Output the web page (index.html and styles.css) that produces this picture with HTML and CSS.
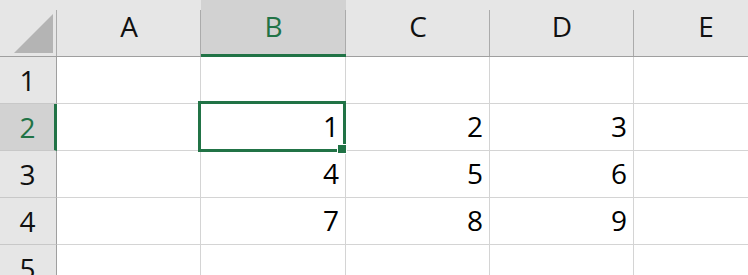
FILE: index.html
```html
<!DOCTYPE html>
<html lang="ja">
<head>
<meta charset="utf-8">
<title>Sheet</title>
<link rel="stylesheet" href="styles.css">
</head>
<body>
<div class="sheet">
  <div class="hd corner"><svg class="tri" width="40" height="40" viewBox="0 0 40 40"><polygon points="0,39 39,39 39,0" fill="#b4b4b4"/></svg></div>
  <div class="hd col">A</div>
  <div class="hd col sel">B</div>
  <div class="hd col">C</div>
  <div class="hd col">D</div>
  <div class="hd col">E</div>

  <div class="rh">1</div>
  <div class="c"></div><div class="c"></div><div class="c"></div><div class="c"></div><div class="c"></div>

  <div class="rh sel">2</div>
  <div class="c"></div>
  <div class="c active">1<span class="selbox"><span class="handle"></span></span></div>
  <div class="c">2</div><div class="c">3</div><div class="c"></div>

  <div class="rh">3</div>
  <div class="c"></div><div class="c">4</div><div class="c">5</div><div class="c">6</div><div class="c"></div>

  <div class="rh">4</div>
  <div class="c"></div><div class="c">7</div><div class="c">8</div><div class="c">9</div><div class="c"></div>

  <div class="rh">5</div>
  <div class="c"></div><div class="c"></div><div class="c"></div><div class="c"></div><div class="c"></div>
</div>
</body>
</html>
```

FILE: styles.css
```css
html, body {
  margin: 0;
  padding: 0;
  background: #ffffff;
  overflow: hidden;
  width: 748px;
  height: 275px;
}
.sheet {
  display: grid;
  grid-template-columns: 57px 144px 145px 144px 144px 144px;
  grid-template-rows: 57px repeat(5, 47px);
  width: 778px;
  font-family: "Open Sans", "Noto Sans CJK JP", sans-serif;
  font-size: 28px;
  color: #000;
}
.hd {
  box-sizing: border-box;
  background-color: #e6e6e6;
  background-image: linear-gradient(#ababab, #ababab);
  background-repeat: no-repeat;
  background-size: 1px calc(100% - 10px);
  background-position: right bottom;
  border-bottom: 1px solid #9f9f9f;
  display: flex;
  align-items: center;
  justify-content: center;
  padding-bottom: 5px;
  color: #111;
}
.hd.sel {
  background-color: #d2d2d2;
  border-bottom: 3px solid #217346;
  padding-bottom: 3px;
  color: #217346;
}
.corner {
  justify-content: flex-start;
  align-items: flex-start;
  padding: 14px 0 0 14px;
}
.tri { display: block; }
.rh {
  box-sizing: border-box;
  background: #e6e6e6;
  border-right: 1px solid #9f9f9f;
  border-bottom: 1px solid #c8c8c8;
  display: flex;
  align-items: center;
  justify-content: center;
  padding-right: 1px;
  color: #111;
}
.rh.sel {
  background: #d2d2d2;
  border-right: 3px solid #217346;
  padding-left: 2px;
  color: #217346;
}
.c {
  box-sizing: border-box;
  border-right: 1px solid #d4d4d4;
  border-bottom: 1px solid #d4d4d4;
  display: flex;
  align-items: center;
  justify-content: flex-end;
  padding-right: 6px;
  padding-bottom: 2px;
}
.c.active { position: relative; }
.selbox {
  position: absolute;
  top: -3px;
  left: -3px;
  right: -1px;
  bottom: -2px;
  border: 3px solid #217346;
}
.handle {
  position: absolute;
  right: -3px;
  bottom: -4px;
  width: 8px;
  height: 8px;
  background: #217346;
  box-shadow: 0 0 0 1px #ffffff;
}
```
